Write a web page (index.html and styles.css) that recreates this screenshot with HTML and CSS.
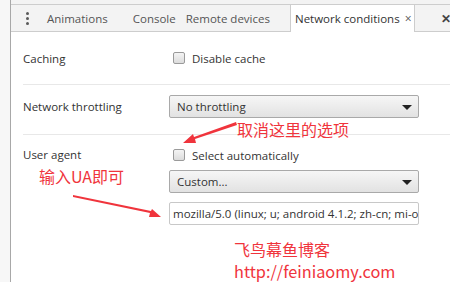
FILE: index.html
```html
<!DOCTYPE html>
<html>
<head>
<meta charset="utf-8">
<link rel="stylesheet" href="styles.css">
</head>
<body>
<div class="app">
  <div class="side"></div>
  <div class="main">
    <div class="topstrip"></div>
    <div class="tabbar">
      <span class="kebab"><i></i><i></i><i></i></span>
      <span class="tab t1">Animations</span>
      <span class="tab t2">Console</span>
      <span class="tab t3">Remote devices</span>
      <span class="tab active">Network conditions <span class="x">×</span></span>
      <span class="close">✕</span>
    </div>
    <div class="content">
      <div class="row row-sep r1">
        <div class="label">Caching</div>
        <div class="ctrl"><span class="cb"></span><span class="cbtext">Disable cache</span></div>
      </div>
      <div class="row row-sep r2">
        <div class="label">Network throttling</div>
        <div class="select">No throttling<span class="caret"></span></div>
      </div>
      <div class="row ua">
        <div class="label">User agent</div>
        <div class="ctrls">
          <div class="ctrl"><span class="cb"></span><span class="cbtext">Select automatically</span></div>
          <div class="select">Custom...<span class="caret"></span></div>
          <div class="input">mozilla/5.0 (linux; u; android 4.1.2; zh-cn; mi-one plus build/jzo54k)</div>
        </div>
      </div>
    </div>
  </div>
  <div class="note n1">取消这里的选项</div>
  <div class="note n2">输入UA即可</div>
  <div class="note n3"><div>飞鸟幕鱼博客</div><div class="url">http://feiniaomy.com</div></div>
  <svg class="arrows" width="450" height="291" viewBox="0 0 450 291">
    <polygon points="236,122 237,125 195,139 196,143 183,143 193,134 194,137" fill="#f0343c"/>
    <polygon points="73,195 73,197 150,213 149,217 161,217 152,209 151,211" fill="#f0343c"/>
  </svg>
</div>
</body>
</html>
```
FILE: styles.css
```css
html, body { margin: 0; padding: 0; }
body {
  width: 450px; height: 291px; overflow: hidden; background: #fff;
  font-family: "Open Sans", "Noto Sans", sans-serif; font-size: 11.5px; color: #333;
}
.app { position: relative; display: flex; width: 450px; height: 291px; }
.side { width: 10px; height: 282px; background: #f7f7f7; border-right: 1px solid #a8a8a8; flex: none; }
.main { flex: 1; display: flex; flex-direction: column; min-width: 0; }
.topstrip { height: 4px; background: #f3f3f3; border-bottom: 1px solid #cdcdcd; }
.tabbar {
  height: 26px; background: #f3f3f3; border-bottom: 1px solid #cdcdcd;
  display: flex; align-items: stretch; position: relative;
}
.kebab { width: 4px; margin-left: 14px; display: flex; flex-direction: column; justify-content: center; align-items: center; gap: 2px; }
.kebab i { width: 3px; height: 3px; background: #5a5a5a; border-radius: 50%; display: block; }
.tab { display: flex; align-items: center; color: #555; white-space: nowrap; flex: none; }
.t1 { margin-left: 18px; }
.t2 { margin-left: 25px; }
.t3 { margin-left: 10px; }
.tab.active {
  background: #fff; color: #333; border-left: 1px solid #cdcdcd; border-right: 1px solid #cdcdcd;
  margin-left: 20px; margin-bottom: -1px; padding: 0 0 0 4px; width: 125px; box-sizing: border-box;
}
.tab .x { margin-left: 5px; font-size: 12px; color: #555; }
.close { margin-left: auto; margin-right: -1px; display: flex; align-items: center; font-size: 12px; font-weight: bold; color: #444; }
.content { padding-left: 12px; }
.row { display: flex; }
.row-sep { border-bottom: 1px solid #e8e8e8; }
.label { width: 146px; flex: none; }
.r1 { height: 52px; align-items: center; }
.r2 { height: 50px; box-sizing: border-box; padding-top: 10px; align-items: flex-start; }
.r2 .label { line-height: 23px; }
.ctrl { display: flex; align-items: center; }
.cb {
  width: 10px; height: 10px; border: 1px solid #9a9a9a; border-radius: 2px; margin-left: 4px;
  background: linear-gradient(#f4f4f4, #dcdcdc);
}
.cbtext { margin-left: 7px; }
.select {
  position: relative; width: 250px; height: 23px; box-sizing: border-box; padding: 0 7px;
  border: 1px solid #a9a9a9; border-radius: 2px; background: linear-gradient(#f6f6f6, #e2e2e2);
  display: flex; align-items: center; color: #333;
}
.caret { position: absolute; right: 6px; top: 9px; width: 0; height: 0; border-left: 5px solid transparent; border-right: 5px solid transparent; border-top: 5px solid #222; }
.ua { padding-top: 12px; }
.ua .label { line-height: 16px; }
.ua .ctrls { display: flex; flex-direction: column; }
.ua .ctrl { height: 16px; margin-bottom: 7px; }
.ua .select { margin-bottom: 9px; }
.input {
  width: 250px; height: 23px; box-sizing: border-box; border: 1px solid #c8c8c8; border-radius: 2px;
  padding: 0 3px; display: flex; align-items: center; white-space: nowrap; overflow: hidden; color: #333;
}
.note { position: absolute; color: #f0343c; font-family: "Noto Sans CJK SC", "Noto Sans", sans-serif; font-size: 16px; line-height: 20px; white-space: nowrap; }
.n1 { left: 237px; top: 119px; }
.n2 { left: 39px; top: 166px; }
.n3 { left: 234px; top: 238px; line-height: 22px; }
.n3 .url { font-size: 16.3px; }
.arrows { position: absolute; left: 0; top: 0; pointer-events: none; }
```
